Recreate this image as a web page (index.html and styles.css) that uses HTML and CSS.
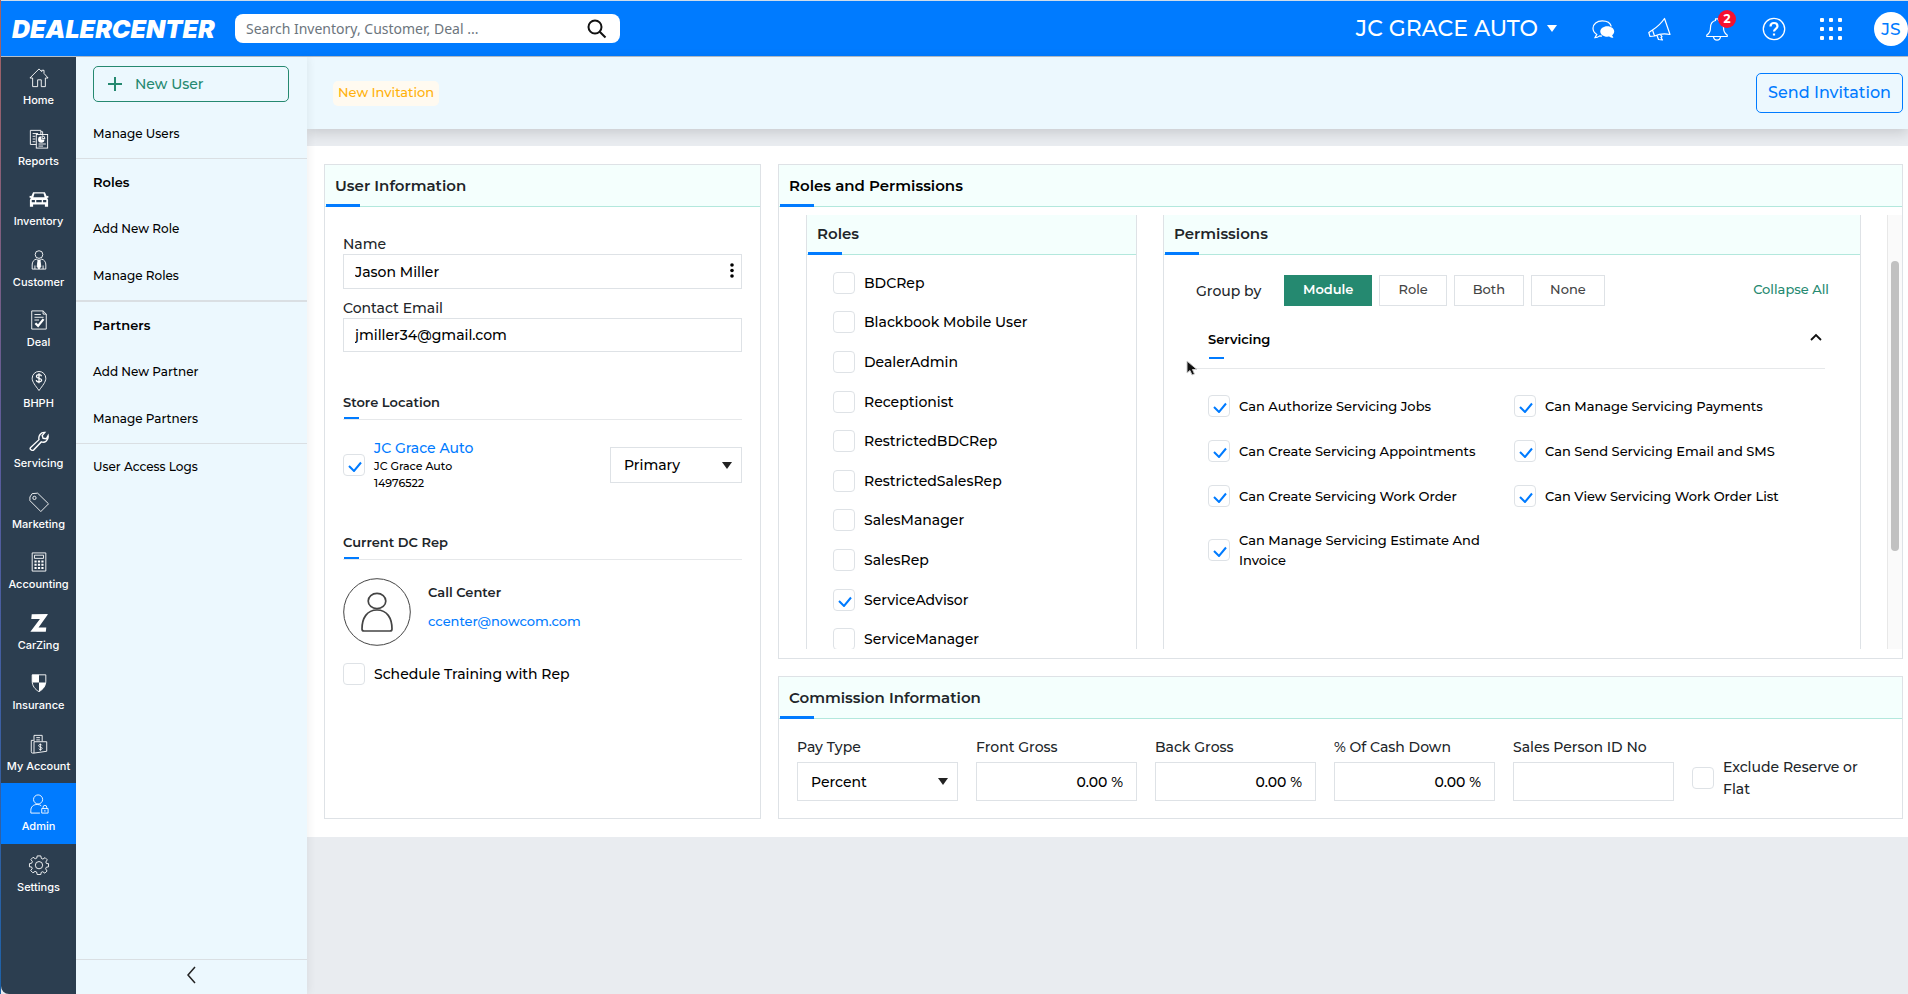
FILE: index.html
```html
<!DOCTYPE html>
<html lang="en">
<head>
<meta charset="utf-8">
<title>DealerCenter - New Invitation</title>
<meta name="viewport" content="width=device-width, initial-scale=1">
<link rel="stylesheet" href="styles.css">
</head>
<body>
<header class="topbar">
  <a class="logo" href="#">DEALERCENTER</a>
  <form class="search" role="search">
    <input class="search-input" type="search" aria-label="Search" placeholder="Search Inventory, Customer, Deal ...">
    <button class="search-btn" type="button" aria-label="Search"><svg width="20" height="20" viewBox="0 0 20 20" fill="none" stroke="#111" stroke-width="2"><circle cx="8" cy="8" r="6.5"/><path d="M12.7 12.7 18.5 18.5"/></svg></button>
  </form>
  <div class="top-actions">
    <button class="dealer" type="button">JC GRACE AUTO <svg width="10" height="7" viewBox="0 0 10 7" fill="#fff"><path d="M0 0h10L5 7z"/></svg></button>
    <button class="top-icon" type="button" aria-label="Chat"><svg width="24" height="24" viewBox="0 0 24 24"><path d="M20.300 9.500C19.500 6.200 16 3.800 11.200 3.800 6 3.800 2 7 2 11.200c0 2.700 1.500 4.800 3.800 6.200L4 20.600c2 0 3.500-.8 4.600-1.700l2.400.3" fill="none" stroke="#fff" stroke-width="1.200"/><path d="M16.300 9.200c3.900 0 6.900 2.300 6.900 5.200 0 1.500-.8 2.800-2.100 3.800l1.300 2.600c-1.800 0-3.200-.6-4.200-1.300-5 .8-8.900-1.700-8.900-5.100 0-2.900 3.100-5.200 7-5.200z" fill="#fff"/></svg></button>
    <button class="top-icon" type="button" aria-label="Announcements"><svg width="24" height="24" viewBox="0 0 24 24" fill="none" stroke="#fff" stroke-width="1.200" stroke-linejoin="round"><path d="M16.500 1.500 22 17.500c-5-1.200-10-1-15.500 1.500L2 19.500.8 15.500 4.500 13C10 9.500 13.500 6 16.500 1.500zM4.500 13l2 6M9 18.500l1.500 4 4 .5-1.500-2.500 1-.8-1.500-2"/></svg></button>
    <button class="top-icon bell" type="button" aria-label="Notifications"><svg width="24" height="24" viewBox="0 0 24 24" fill="none" stroke="#fff" stroke-width="1.200" stroke-linejoin="round"><path d="M10.500 3.500V1.800h3v1.700c3.500.9 5 3.500 5 7 0 4 1 6 3.700 7.500v1.500H1.800V18c2.700-1.500 3.700-3.500 3.700-7.500 0-3.500 1.500-6.100 5-7zM8.500 20c.3 2 1.700 3.200 3.500 3.200s3.200-1.200 3.500-3.200"/></svg><span class="badge">2</span></button>
    <button class="top-icon" type="button" aria-label="Help"><svg width="24" height="24" viewBox="0 0 24 24" fill="none" stroke="#fff"><circle cx="12" cy="12" r="10.700" stroke-width="1.300"/><path d="M8.500 9.500c0-2.200 1.500-3.500 3.500-3.500s3.500 1.300 3.500 3.200c0 2.500-3.500 2.800-3.500 5.300M12 16.500v2" stroke-width="2.200"/></svg></button>
    <button class="top-icon" type="button" aria-label="Apps"><svg width="24" height="24" viewBox="0 0 24 24" fill="#fff"><g id="dots"><rect x="1" y="1" width="4" height="4" rx="1"/><rect x="10" y="1" width="4" height="4" rx="1"/><rect x="19" y="1" width="4" height="4" rx="1"/></g><use href="#dots" y="9"/><use href="#dots" y="18"/></svg></button>
    <button class="avatar" type="button" aria-label="Account">JS</button>
  </div>
</header>
<div class="shell">
  <nav class="rail" aria-label="Main">
    <div class="rail-list">
      <a class="rail-item" href="#"><svg class="ri" viewBox="0 0 22 22"><path d="M1 11 11 1l3 3V2.500h2.500V6L21 11h-3v9.500h-4.500V13h-4v7.500H4V11z"/></svg>Home</a>
      <a class="rail-item" href="#"><svg class="ri" viewBox="0 0 22 22"><path d="M8 17H1.500V1.500H13V6M4 5h6M4 8h3M4 11h3M4 14h3M13 3h2v3"/><rect x="8" y="6" width="12.500" height="15"/><path d="M13.500 8v3.500H17a3.500 3.500 0 1 1-3.500-3.500z" fill="#fff" stroke="none"/><path d="M14.500 7.500a3 3 0 0 1 3 3h-3zM10.500 16.500h8M10.500 18.800h5"/></svg>Reports</a>
      <a class="rail-item" href="#"><svg class="ri" viewBox="0 0 22 22"><path fill="#fff" stroke="none" fill-rule="evenodd" d="M4.500 3.500h13l2 4.500 1.500-.5.700 1.500-1.700 1 1 2v7.500h-3.500V17h-13v2.500H1V12l1-2-1.700-1L1 7.500l1.500.5zM6 5 4.800 9h12.400L16 5zM3 12v2.500h3.500V12zm5 0v2.500h6V12zm7.500 0v2.500H19V12z"/></svg>Inventory</a>
      <a class="rail-item" href="#"><svg class="ri" viewBox="0 0 22 22"><circle cx="11" cy="5" r="4.200"/><path d="M8 10c-3 1-4.500 3-4.500 6.500V21h15v-4.500C18.500 13 17 11 14 10l-3 2zM6.500 21v-4M15.500 21v-4"/><path d="M10 11h2l1 7-2 3-2-3z" fill="#fff"/></svg>Customer</a>
      <a class="rail-item" href="#"><svg class="ri" viewBox="0 0 22 22"><path d="M3 1h12.500L19 4.500V21H3zM15.500 1v3.500H19M6 5h7M6 8h10M6 11h5"/><path d="M7 14.500l3 3L16 10" stroke-width="2.500"/></svg>Deal</a>
      <a class="rail-item" href="#"><svg class="ri" viewBox="0 0 22 22"><path d="M11 21.500C7 16 3.500 12 3.500 8a7.500 7.500 0 0 1 15 0c0 4-3.500 8-7.500 13.500z"/><path d="M13.800 5.800C13.500 4.600 12.500 4 11 4 9.300 4 8.200 4.800 8.200 6c0 2.800 5.700 1.200 5.700 4 0 1.300-1.200 2-2.900 2-1.600 0-2.800-.7-3-2M11 2.500v11" stroke-width="1.400"/></svg>BHPH</a>
      <a class="rail-item" href="#"><svg class="ri" viewBox="0 0 22 22"><path d="M1.500 18.500 11 9.500c-1-4 2-8.500 6.500-8l-3 3.500 1 3 3.500.5L21 5c.8 5-3.500 8.500-7.500 7L5 21c-2 1-4.500-1-3.500-2.500z" stroke-width="1.500"/></svg>Servicing</a>
      <a class="rail-item" href="#"><svg class="ri" viewBox="0 0 22 22"><path d="M3.500 1.800 9.500 1.300 21.500 13 13 21.500 1 9.500v-4z" stroke-linejoin="round"/><circle cx="6" cy="6.500" r="1.800"/></svg>Marketing</a>
      <a class="rail-item" href="#"><svg class="ri" viewBox="0 0 22 22"><path d="M3.500 1h15v20h-15zM6 3.500h10v3.500H6z"/><path d="M6 10.500h10M6 14h10M6 17.500h10" stroke-width="2.200" stroke-dasharray="2.400 1.400"/></svg>Accounting</a>
      <a class="rail-item" href="#"><svg class="ri" viewBox="0 0 22 22"><path fill="#fff" stroke="none" d="M3 1.500 20.500 1v1L10.500 16h8.500l-.5 4.500H1.500L12 6.500H2.500z"/></svg>CarZing</a>
      <a class="rail-item" href="#"><svg class="ri" viewBox="0 0 22 22"><path d="M3.500 2h15v7c0 5-3 9-7.500 11.500C6.500 18 3.500 14 3.500 9z"/><path fill="#fff" stroke="none" d="M3.500 2H11v8.500H3.500zM11 10.500h7.300C18 15 15 18.500 11 20.500z"/></svg>Insurance</a>
      <a class="rail-item" href="#"><svg class="ri" viewBox="0 0 22 22"><path d="M5.500 8V1.500h9V8M8 4h4M8 6.500h4M5.500 21H4c-1 0-1.500-.5-1.500-1.500V7H5M5.500 8.500h14V19l-14 2z"/><path d="M14.200 12.500c-.4-.8-1-1-1.700-1-2.500 0-2.500 2.500 0 2.800 2.600.3 2.500 2.900 0 2.900-.8 0-1.400-.3-1.800-1M12.500 10.500v8"/></svg>My Account</a>
      <a class="rail-item active" href="#" aria-current="page"><svg class="ri" viewBox="0 0 22 22"><circle cx="10" cy="6" r="5"/><path d="M12 21H2v-3c0-4 3-6.500 7-6.500 2 0 3.500.5 4.500 1.500M14 16h7v5h-7zM15.500 16v-1.500a2 2 0 0 1 4 0V16M17.500 17.500v2"/></svg>Admin</a>
      <a class="rail-item" href="#"><svg class="ri" viewBox="0 0 22 22"><path d="M9 1h4l.6 2.800 1.700.7 2.400-1.600 2.400 2.400-1.600 2.400.7 1.700L21.500 9.500v3.500l-2.500.5-.7 1.700 1.600 2.400-2.400 2.400-2.400-1.600-1.700.7L13 21.500H9l-.6-2.800-1.700-.7-2.400 1.600-2.400-2.400 1.600-2.400-.7-1.700L.5 13V9.500L3 9l.7-1.700-1.600-2.400 2.400-2.400 2.400 1.600 1.700-.7z" stroke-linejoin="round"/><circle cx="11" cy="11.200" r="4"/></svg>Settings</a>
    </div>
  </nav>
  <aside class="side" aria-label="Admin">
    <button class="new-user" type="button"><svg width="14" height="14" viewBox="0 0 14 14" stroke="#258970" stroke-width="2"><path d="M7 0v14M0 7h14"/></svg>New User</button>
    <div class="side-group first"><a class="side-link" href="#">Manage Users</a></div>
    <div class="side-group"><h2 class="side-title">Roles</h2><a class="side-link" href="#">Add New Role</a><a class="side-link" href="#">Manage Roles</a></div>
    <div class="side-group thick"><h2 class="side-title">Partners</h2><a class="side-link" href="#">Add New Partner</a><a class="side-link" href="#">Manage Partners</a></div>
    <div class="side-group"><a class="side-link" href="#">User Access Logs</a></div>
    <button class="collapse" type="button" aria-label="Collapse menu"><svg width="9" height="18" viewBox="0 0 9 18" fill="none" stroke="#222" stroke-width="1.500"><path d="M8 1 1 9l7 8"/></svg></button>
  </aside>
  <main class="main">
    <div class="page-head"><span class="tag">New Invitation</span><button class="send" type="button">Send Invitation</button></div>
    <div class="content">
      <section class="card user-card">
        <h2 class="card-title">User Information</h2>
        <div class="user-body">
          <label class="label" for="name">Name</label>
          <div class="name-box"><input class="field" id="name" value="Jason Miller"><button class="more" type="button" aria-label="More name fields"><svg width="4" height="15" viewBox="0 0 4 15"><circle cx="2" cy="2" r="1.800"/><circle cx="2" cy="7.500" r="1.800"/><circle cx="2" cy="13" r="1.800"/></svg></button></div>
          <label class="label email-label" for="email">Contact Email</label>
          <input class="field" id="email" type="email" value="jmiller34@gmail.com">
          <h3 class="sub-title">Store Location</h3>
          <div class="store">
            <input class="check" type="checkbox" id="store" checked>
            <div class="store-text"><label class="link" for="store">JC Grace Auto</label><span>JC Grace Auto</span><span>14976522</span></div>
            <select class="field select store-select" aria-label="Store type"><option>Primary</option></select>
          </div>
          <h3 class="sub-title">Current DC Rep</h3>
          <div class="rep">
            <svg width="68" height="68" viewBox="0 0 68 68" fill="none" stroke="#444"><circle cx="34" cy="34" r="33.300"/><g stroke-width="1.700"><ellipse cx="34" cy="23" rx="8.800" ry="7.700"/><path d="M21 53h26c1.300 0 2-.8 2-2 0-11-5-19-15-19s-15 8-15 19c0 1.200.7 2 2 2z"/></g></svg>
            <div class="rep-text"><strong>Call Center</strong><a class="rep-link" href="#">ccenter@nowcom.com</a></div>
          </div>
          <label class="check-row training"><input class="check" type="checkbox">Schedule Training with Rep</label>
        </div>
      </section>
      <div class="right">
        <section class="card">
          <h2 class="card-title dark">Roles and Permissions</h2>
          <div class="scroll">
            <div class="inner-card roles">
              <h3 class="card-title inner">Roles</h3>
              <div class="role-list">
                <label class="check-row"><input class="check" type="checkbox">BDCRep</label>
                <label class="check-row"><input class="check" type="checkbox">Blackbook Mobile User</label>
                <label class="check-row"><input class="check" type="checkbox">DealerAdmin</label>
                <label class="check-row"><input class="check" type="checkbox">Receptionist</label>
                <label class="check-row"><input class="check" type="checkbox">RestrictedBDCRep</label>
                <label class="check-row"><input class="check" type="checkbox">RestrictedSalesRep</label>
                <label class="check-row"><input class="check" type="checkbox">SalesManager</label>
                <label class="check-row"><input class="check" type="checkbox">SalesRep</label>
                <label class="check-row"><input class="check" type="checkbox" checked>ServiceAdvisor</label>
                <label class="check-row"><input class="check" type="checkbox">ServiceManager</label>
              </div>
            </div>
            <div class="inner-card perms">
              <h3 class="card-title inner">Permissions</h3>
              <div class="group-bar"><span class="group-label">Group by</span><button class="seg on" type="button">Module</button><button class="seg" type="button">Role</button><button class="seg" type="button">Both</button><button class="seg" type="button">None</button><a class="collapse-all" href="#">Collapse All</a></div>
              <div class="module-head"><h4 class="module-title">Servicing</h4><button class="caret" type="button" aria-label="Collapse Servicing"><svg width="12" height="8" viewBox="0 0 12 8" fill="none" stroke="#111" stroke-width="1.800"><path d="M1 7l5-5 5 5"/></svg></button></div>
              <div class="perm-grid">
                <label class="check-row"><input class="check" type="checkbox" checked>Can Authorize Servicing Jobs</label>
                <label class="check-row"><input class="check" type="checkbox" checked>Can Manage Servicing Payments</label>
                <label class="check-row"><input class="check" type="checkbox" checked>Can Create Servicing Appointments</label>
                <label class="check-row"><input class="check" type="checkbox" checked>Can Send Servicing Email and SMS</label>
                <label class="check-row"><input class="check" type="checkbox" checked>Can Create Servicing Work Order</label>
                <label class="check-row"><input class="check" type="checkbox" checked>Can View Servicing Work Order List</label>
                <label class="check-row tall"><input class="check" type="checkbox" checked>Can Manage Servicing Estimate And Invoice</label>
              </div>
              <svg class="pointer" width="12" height="17" viewBox="0 0 12 17"><path d="M1 1v12l3-2.500L6 15l2.500-1-2-4.500H11z" fill="#111" stroke="#ccc" stroke-width="1"/></svg>
            </div>
            <div class="track"><div class="thumb"></div></div>
          </div>
        </section>
        <section class="card">
          <h2 class="card-title">Commission Information</h2>
          <div class="commission">
            <div class="cell"><label class="label" for="pay">Pay Type</label><select class="field select" id="pay"><option>Percent</option></select></div>
            <div class="cell"><label class="label" for="front">Front Gross</label><input class="field num" id="front" value="0.00 %"></div>
            <div class="cell"><label class="label" for="back">Back Gross</label><input class="field num" id="back" value="0.00 %"></div>
            <div class="cell"><label class="label" for="cash">% Of Cash Down</label><input class="field num" id="cash" value="0.00 %"></div>
            <div class="cell"><label class="label" for="sales">Sales Person ID No</label><input class="field num" id="sales"></div>
            <label class="check-row exclude"><input class="check" type="checkbox">Exclude Reserve or Flat</label>
          </div>
        </section>
      </div>
    </div>
  </main>
</div>
</body>
</html>
```
FILE: styles.css
```css
:root {
  --blue: #007bff;
  --green: #258970;
  --line: #dee2e6;
  --ink: #212529;
  --pale: #ecf8fe;
}
* { box-sizing: border-box; }
html, body { height: 100%; }
body {
  margin: 0;
  display: flex;
  flex-direction: column;
  font: 500 14px/20px Montserrat, Inter, sans-serif;
  color: #000;
  background: #e9ecf0;
  border: 0 solid;
  border-left-width: 1px;
  border-image: linear-gradient(#a8625f, #5c5c9c 45%, #1d62a8) 1;
  overflow: hidden;
}
h2, h3, h4 { margin: 0; font-weight: 600; }
a { text-decoration: none; color: inherit; }
button, input, select { font: inherit; color: inherit; margin: 0; padding: 0; }
button { background: none; border: 0; cursor: pointer; }
svg { display: block; flex: none; }

/* top bar */
.topbar {
  height: 57px;
  flex: none;
  display: flex;
  align-items: center;
  background: var(--blue);
  border-top: 1px solid #cfdcea;
  border-bottom: 1px solid #b5bfca;
  color: #fff;
  padding-left: 11px;
}
.logo { font: italic 900 25px/28px Inter, sans-serif; width: 223px; }
.search { width: 385px; height: 29px; display: flex; align-items: center; background: #fff; border-radius: 8px; padding: 0 13px 0 11px; }
.search-input { flex: 1; min-width: 0; border: 0; outline: 0; background: none; font: 400 14px/20px "Noto Sans", sans-serif; color: #333; }
.search-input::placeholder { color: #6c757d; opacity: 1; }
.top-actions { margin-left: auto; display: flex; align-items: center; }
.dealer { display: flex; align-items: center; gap: 9px; font-size: 22px; line-height: 28px; margin-right: 34px; }
.top-icon { margin-right: 33px; position: relative; }
.badge { position: absolute; left: 13px; top: -7px; width: 18px; height: 18px; border-radius: 9px; background: #f5102f; color: #fff; font-size: 12px; font-weight: 700; line-height: 18px; text-align: center; }
.avatar { width: 34px; height: 34px; border-radius: 50%; background: #fff; color: var(--blue); font-size: 17px; margin-left: -2px; }

/* frame */
.shell { flex: 1; min-height: 0; display: flex; }
.rail { width: 75px; flex: none; background: #2c3e50; border-bottom-left-radius: 8px; overflow: hidden; }
.rail-list { height: 847px; display: grid; grid-auto-rows: 1fr; }
.rail-item { display: flex; flex-direction: column; align-items: center; gap: 4px; padding-top: 11px; color: #fff; font: 500 11px/16px Inter, sans-serif; white-space: nowrap; }
.rail-item.active { background: var(--blue); }
.ri { width: 22px; height: 20px; fill: none; stroke: #fff; stroke-width: 1; }
.side { width: 231px; flex: none; display: flex; flex-direction: column; background: var(--pale); box-shadow: 2px 0 8px rgba(0, 0, 0, .06); z-index: 1; font-size: 12px; }
.new-user { height: 36px; margin: 9px 18px 0 17px; flex: none; border: 1px solid var(--green); border-radius: 5px; display: flex; align-items: center; gap: 13px; padding: 0 0 1px 14px; color: var(--green); font-size: 14px; }
.side-group { display: flex; flex-direction: column; gap: 27px; padding: 13px 17px 14px; border-top: 1px solid #dadfe3; }
.side-group.first { border-top: 0; padding-top: 22px; }
.side-group.thick { border-top-width: 2px; }
.side-title { font-size: 13px; line-height: 20px; }
.collapse { margin-top: auto; height: 35px; padding-bottom: 5px; border-top: 1px solid #dadfe3; display: flex; align-items: center; justify-content: center; flex: none; }

/* main area */
.main { flex: 1; min-width: 0; display: flex; flex-direction: column; }
.page-head { height: 72px; flex: none; background: var(--pale); display: flex; align-items: center; justify-content: space-between; padding: 0 5px 0 26px; box-shadow: 0 4px 12px rgba(0, 0, 0, .14); }
.tag { background: #fffaf0; color: #ffb10a; border-radius: 5px; padding: 1px 5px 3px; font-size: 13px; line-height: 21px; }
.send { height: 40px; padding: 0 11px; border: 1px solid var(--blue); border-radius: 5px; color: var(--blue); font-size: 16px; }
.content { margin-top: 17px; background: #fff; padding: 18px 5px 18px 17px; display: grid; grid-template-columns: 437fr 1125fr; gap: 17px; position: relative; }
.card { border: 1px solid var(--line); background: #fff; }
.card-title { position: relative; height: 42px; padding-left: 10px; font-size: 15px; line-height: 41px; background: #f4fffd; border-bottom: 1px solid #b3e8dd; color: var(--ink); }
.card-title::after { content: ""; position: absolute; left: 1px; bottom: -1px; width: 34px; height: 3px; background: var(--blue); }
.card-title.dark { color: #000; }
.card-title.inner { height: 40px; line-height: 37px; }
.user-body { padding: 27px 18px; }
.label { display: block; color: var(--ink); line-height: 20px; }
.field { display: block; width: 100%; height: 34px; padding: 0 11px; border: 1px solid var(--line); border-radius: 0; background: #fff; }
.name-box { position: relative; }
.name-box .field { height: 35px; }
.more { position: absolute; right: 8px; top: 9px; }
.email-label { margin-top: 9px; }
.sub-title { position: relative; margin-top: 40px; padding-bottom: 7px; font-size: 13px; line-height: 20px; border-bottom: 1px solid #e6e8ea; color: var(--ink); }
.sub-title::after, .module-title::after { content: ""; position: absolute; left: 1px; bottom: 0; width: 15px; height: 2px; background: var(--blue); }
.store { display: flex; align-items: center; padding-top: 18px; }
.store-text { display: flex; flex-direction: column; padding-left: 9px; font-size: 11px; line-height: 17px; }
.store-text .link { color: var(--blue); font-size: 14px; line-height: 20px; }
.select { appearance: none; padding-left: 13px; background: #fff url("data:image/svg+xml,%3Csvg xmlns='http://www.w3.org/2000/svg' width='10' height='7'%3E%3Cpath d='M0 0h10L5 7z' fill='%23222'/%3E%3C/svg%3E") no-repeat right 9px center; }
.store-select { width: 132px; height: 36px; margin-left: auto; }
.rep { display: flex; padding-top: 18px; gap: 17px; }
.rep-text { display: flex; flex-direction: column; gap: 9px; padding-top: 4px; font-size: 13px; }
.rep-text strong { font-weight: 600; color: var(--ink); }
.rep-link { color: var(--blue); }
.check { appearance: none; flex: none; width: 22px; height: 22px; border: 1px solid var(--line); border-radius: 4px; background: #fff; }
.check:checked { background: #fff url("data:image/svg+xml,%3Csvg xmlns='http://www.w3.org/2000/svg' width='14' height='11'%3E%3Cpath d='M1 5l5 5 7-8.500' fill='none' stroke='%23007bff' stroke-width='2'/%3E%3C/svg%3E") no-repeat 4px 6px; }
.check-row { display: flex; align-items: center; gap: 9px; }
.training { margin-top: 17px; }

/* roles and permissions */
.right { display: grid; grid-template-rows: auto 1fr; gap: 17px; min-width: 0; }
.scroll { height: 434px; margin: 8px 0 9px; padding-left: 27px; display: grid; grid-template-columns: 331fr 698fr 15px; column-gap: 26px; overflow: hidden; }
.inner-card { border: solid var(--line); border-width: 0 1px; min-width: 0; position: relative; }
.role-list { height: 396px; display: grid; grid-auto-rows: 1fr; padding-left: 26px; margin-top: 8px; }
.group-bar { display: flex; align-items: center; gap: 7px; padding: 20px 31px 0 32px; font-size: 13px; }
.group-label { font-size: 14px; width: 81px; color: var(--ink); }
.seg { height: 31px; border: 1px solid var(--line); padding: 0 18px 3px; color: #444; }
.seg.on { background: var(--green); border-color: var(--green); color: #fff; font-weight: 600; }
.collapse-all { margin-left: auto; padding-bottom: 3px; color: var(--green); }
.module-head { display: flex; justify-content: space-between; align-items: flex-start; margin: 0 35px 0 32px; padding: 20px 3px 9px 12px; border-bottom: 1px solid #e6e8ea; }
.module-title { position: relative; padding-bottom: 7px; font-size: 13px; line-height: 26px; }
.caret { padding-top: 7px; }
.perm-grid { display: grid; grid-template-columns: 306px 1fr; row-gap: 23px; padding: 26px 0 0 44px; font-size: 13px; }
.perm-grid .tall { width: 290px; line-height: 20px; }
.pointer { position: absolute; left: 22px; top: 145px; }
.track { border-left: 1px solid #e8e8e8; background: #fafafa; padding: 46px 3px 0; }
.thumb { height: 290px; border-radius: 4px; background: #c1c1c1; }

/* commission */
.commission { display: grid; grid-template-columns: repeat(5, 161fr) 195fr; column-gap: 18px; padding: 18px 15px 17px 18px; }
.commission .field { height: 39px; margin-top: 5px; }
.num { text-align: right; padding-right: 13px; }
.exclude { line-height: 22px; padding-top: 17px; color: var(--ink); }
```
